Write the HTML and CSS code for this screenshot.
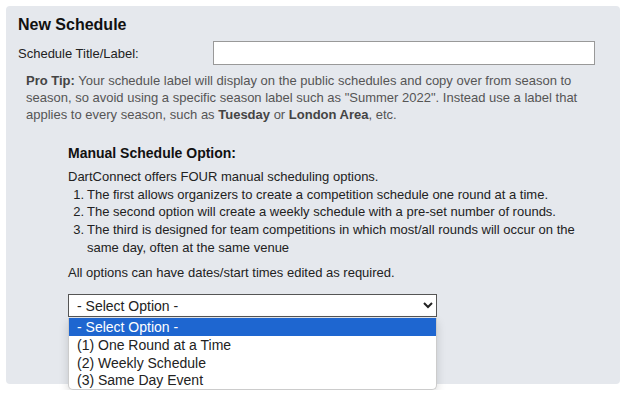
FILE: index.html
```html
<!DOCTYPE html>
<html lang="en">
<head>
    <meta charset="UTF-8">
    <meta name="viewport" content="width=device-width, initial-scale=1.0">
    <title>New Schedule</title>
    <link rel="stylesheet" href="styles.css">
</head>
<body>
    <div class="panel">
        <h2>New Schedule</h2>

        <div class="form-row">
            <label for="scheduleLabel">Schedule Title/Label:</label>
            <input type="text" id="scheduleLabel">
        </div>

        <p class="pro-tip">
            <b>Pro Tip:</b> Your schedule label will display on the public schedules and copy over from season to
            season, so avoid using a specific season label such as "Summer 2022". Instead use a label that
            applies to every season, such as <b>Tuesday</b> or <b>London Area</b>, etc.
        </p>

        <div class="manual-option">
            <h3>Manual Schedule Option:</h3>
            <p class="intro">DartConnect offers FOUR manual scheduling options.</p>
            <ol>
                <li>The first allows organizers to create a competition schedule one round at a time.</li>
                <li>The second option will create a weekly schedule with a pre-set number of rounds.</li>
                <li>The third is designed for team competitions in which most/all rounds will occur on the same day, often at the same venue</li>
            </ol>
            <p class="note">All options can have dates/start times edited as required.</p>

            <div class="select-wrap">
                <select id="scheduleType">
                    <option value="">- Select Option -</option>
                    <option value="1">(1) One Round at a Time</option>
                    <option value="2">(2) Weekly Schedule</option>
                    <option value="3">(3) Same Day Event</option>
                </select>
                <!-- open dropdown list -->
                <ul class="dropdown">
                    <li class="active">- Select Option -</li>
                    <li>(1) One Round at a Time</li>
                    <li>(2) Weekly Schedule</li>
                    <li>(3) Same Day Event</li>
                </ul>
            </div>
        </div>
    </div>
</body>
</html>
```

FILE: styles.css
```css
body {
    margin: 0;
    background: #fff;
    font-family: "Liberation Sans", Arial, sans-serif;
    font-size: 13px;
    color: #222;
}
.panel {
    margin: 6px;
    height: 378px;
    box-sizing: border-box;
    padding: 10px 12px 0 12px;
    background: #e5e8ed;
    border-radius: 4px;
}
.panel h2 {
    margin: 0;
    font-size: 16px;
    line-height: 18px;
    color: #111;
}
.form-row {
    display: flex;
    align-items: center;
    margin-top: 7px;
}
.form-row label {
    width: 195px;
    line-height: 17px;
}
.form-row input {
    width: 382px;
    height: 24px;
    box-sizing: border-box;
    border: 1px solid #999;
    border-radius: 0;
    background: #fff;
    font: inherit;
}
.pro-tip {
    margin: 7px 0 0 8px;
    color: #555;
    line-height: 17px;
}
.pro-tip b {
    color: #444;
}
.manual-option {
    padding-left: 50px;
    margin-top: 21px;
}
.manual-option h3 {
    margin: 0 0 6px 0;
    font-size: 14px;
    line-height: 18px;
    color: #111;
}
.intro,
.note {
    margin: 0;
    line-height: 17.7px;
}
.note {
    margin-top: 7px;
}
.manual-option ol {
    margin: 0;
    padding: 0;
    width: 529px;
    list-style: none;
    counter-reset: item;
    line-height: 17.7px;
}
.manual-option ol li {
    display: flex;
    counter-increment: item;
}
.manual-option ol li::before {
    content: counter(item) ".";
    flex: none;
    width: 16px;
    margin-right: 3px;
    text-align: right;
}
.select-wrap {
    position: relative;
    width: 369px;
    margin-top: 13px;
}
.select-wrap select {
    width: 369px;
    height: 23px;
    font-family: inherit;
    font-size: 14px;
    color: #222;
    background: #fff;
    border: 1px solid #555;
    padding: 0 4px;
}
.dropdown {
    position: absolute;
    left: 0;
    top: 24px;
    width: 369px;
    box-sizing: border-box;
    margin: 0;
    padding: 0;
    list-style: none;
    background: #fff;
    border: 1px solid #ccc;
    border-top: 0;
    border-radius: 0 0 5px 5px;
    box-shadow: 0 4px 10px rgba(0, 0, 0, 0.15);
    font-size: 14px;
    overflow: hidden;
}
.dropdown li {
    padding: 0 8px;
    height: 17.5px;
    line-height: 18px;
    color: #222;
}
.dropdown li.active {
    height: 18px;
    background: #1e66d0;
    color: #fff;
}
```
